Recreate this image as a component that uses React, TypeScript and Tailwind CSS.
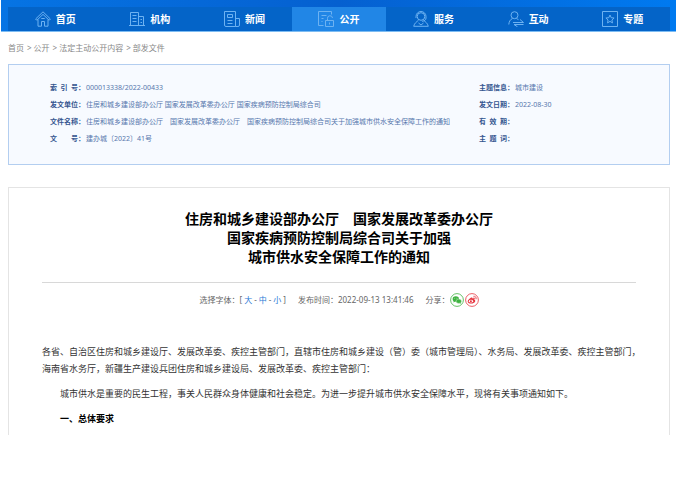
import type { ReactNode } from 'react';

const stroke = { fill: 'none', stroke: 'currentColor', strokeWidth: 1, strokeLinejoin: 'round' as const };

const icons: Record<string, ReactNode> = {
  首页: (
    <>
      <path d="M.6 8 8 .8 15.400 8l-1.200 1.300L8 3.400 1.800 9.300z" />
      <path d="M3 8.500v6.700h3.500v-4.700h3v4.700H13V8.500M6.300 7.500h3.400" />
    </>
  ),
  机构: (
    <>
      <path d="M1.500 14.500v-13h8v13M9.500 5.500h5v9M0 14.500h16" />
      <path d="M3.500 4.500h4M3.500 7.500h4M3.500 10.500h4M11.500 8.500h1.500M11.500 11.500h1.500" />
    </>
  ),
  新闻: (
    <>
      <path d="M11.500 15.500H2a1.500 1.500 0 0 1-1.500-1.500V.5h11zh2.500a1.500 1.500 0 0 0 1.500-1.500V7.500h-4" />
      <path d="M3.500 3.500h5v3h-5zM3.500 9.500h5M3.500 12.500h5" />
    </>
  ),
  公开: (
    <>
      <path d="M5.500 14.500H.5V.5h13v3M3.500 4.500h5M3.500 7.500h2M3.500 10.500h1" />
      <path d="M7.500 9.500h8v6h-8zM9.500 9.500V7.500a2.500 2.500 0 0 1 5-.5M11.500 11.500v2" />
    </>
  ),
  服务: (
    <>
      <circle cx="8" cy="5.500" r="3.800" />
      <path d="M3 7V5.500a5 5 0 0 1 10 0V7c0 2-1.500 3-4 3.300" />
      <path d="M5.500 9.200C3.500 11 1.500 12 .7 15.300h14.600c-.8-3.300-2.800-4.300-4.800-6.100M5.500 12l2.500 2 2.500-2" />
    </>
  ),
  互动: (
    <>
      <circle cx="6.500" cy="4.200" r="3.500" />
      <path d="M4.500 7.500C2 8.500 1 11 .8 13.500M8.500 7.500l2 1.200" />
      <path d="M5 11.500h10.500l-3.500-3M15.500 13.500H6l3.500 2.300" />
    </>
  ),
  专题: (
    <>
      <path d="M.5.5h15v15H.5z" />
      <path d="m8 4 1.200 2.700 2.900.3-2.200 2 .6 2.900L8 10.400l-2.500 1.500.6-2.900-2.200-2 2.900-.3z" />
    </>
  ),
};

const navItems = ['首页', '机构', '新闻', '公开', '服务', '互动', '专题'];

const crumbs = ['首页', '公开', '法定主动公开内容', '部发文件'];

const leftFields = [
  ['索引号', '000013338/2022-00433'],
  ['发文单位', '住房和城乡建设部办公厅 国家发展改革委办公厅 国家疾病预防控制局综合司'],
  ['文件名称', '住房和城乡建设部办公厅　国家发展改革委办公厅　国家疾病预防控制局综合司关于加强城市供水安全保障工作的通知'],
  ['文号', '建办城〔2022〕41号'],
];

const rightFields = [
  ['主题信息', '城市建设'],
  ['发文日期', '2022-08-30'],
  ['有效期', ''],
  ['主题词', ''],
];

function Fields({ rows }: { rows: string[][] }) {
  return (
    <dl>
      {rows.map(([label, value]) => (
        <div key={label} className="flex whitespace-nowrap">
          <dt className="flex w-9 shrink-0 font-bold text-[#34558f]">
            <span className="flex w-7 justify-between">
              {label.split('').map((c) => (
                <span key={c}>{c}</span>
              ))}
            </span>
            ：
          </dt>
          <dd>{value}</dd>
        </div>
      ))}
    </dl>
  );
}

function Nav() {
  return (
    <header className="ml-px border-b border-[#7dbcf2] bg-linear-to-r from-[#0674e4] via-[#0560d0] to-[#007af0] pr-[6px] pl-[7px] pt-[7px]">
      <nav className="grid grid-cols-7 bg-[#0464c8]">
        {navItems.map((name) => (
          <a
            key={name}
            href="#"
            className={`flex h-6 items-center justify-center gap-[5px] text-[10px] font-bold text-white ${name === '公开' ? 'bg-[#2186e6]' : ''}`}
          >
            <svg viewBox="0 0 16 16" className="size-4 text-[#6db2f2]" {...stroke} aria-hidden="true">
              {icons[name]}
            </svg>
            {name}
          </a>
        ))}
      </nav>
    </header>
  );
}

function WeChat() {
  return (
    <svg viewBox="0 0 14 14" className="size-[14px]" aria-hidden="true">
      <circle cx="7" cy="7" r="6.400" fill="#fff" stroke="#3eb340" strokeWidth=".8" />
      <ellipse cx="5.800" cy="6" rx="3.200" ry="2.700" fill="#3eb340" />
      <path d="m3.800 7.800-.4 1.800 2-1z" fill="#3eb340" />
      <ellipse cx="8.800" cy="8.200" rx="2.700" ry="2.200" fill="#3eb340" stroke="#fff" strokeWidth=".4" />
      <path d="m9.500 10 1.400.8-.3-1.500z" fill="#3eb340" />
      <circle cx="4.800" cy="5.200" r=".4" fill="#fff" />
      <circle cx="6.900" cy="5.200" r=".4" fill="#fff" />
    </svg>
  );
}

function Weibo() {
  return (
    <svg viewBox="0 0 14 14" className="size-[14px]" aria-hidden="true">
      <circle cx="7" cy="7" r="6.400" fill="#fff" stroke="#e6353f" strokeWidth=".8" />
      <path
        d="M5.800 4.700c.9-.6 1.900-.2 1.600.8 1.300-.5 2.300-.1 1.900.9 2 .9.9 4.100-3.200 4.100-4.600 0-4.300-3.500-.3-5.800z"
        fill="#e6353f"
      />
      <ellipse cx="6" cy="8.200" rx="2.100" ry="1.400" fill="#fff" />
      <circle cx="5.900" cy="8.300" r="1" fill="#e6353f" />
      <path
        d="M8.400 3.300c2-.4 3.200 1.100 2.700 3M8.600 4.800c.9-.1 1.300.4 1.100 1.200"
        fill="none"
        stroke="#e6353f"
        strokeWidth=".8"
      />
    </svg>
  );
}

export default function App() {
  return (
    <div className="min-h-screen bg-white font-['Noto_Sans','Noto_Sans_CJK_SC',sans-serif]">
      <Nav />
      <nav className="mt-2 flex gap-[3px] px-2 text-[8px] leading-4 text-[#888]">
        {crumbs.map((crumb, i) => (
          <span key={crumb} className="flex gap-[2px]">
            {i > 0 && <span>&gt;</span>}
            <a href="#">{crumb}</a>
          </span>
        ))}
      </nav>
      <main className="mr-[6px] ml-2">
        <section className="mt-2 grid grid-cols-[429px_1fr] border border-[#b3cef0] bg-[#f7faff] pt-[14px] pb-[17px] pl-[41px] text-[7px] leading-[17px] text-[#5677ad]">
          <Fields rows={leftFields} />
          <Fields rows={rightFields} />
        </section>
        <article className="mt-[22px] border border-b-0 border-[#e4e4e4] px-[33px] pt-[21px] pb-2">
          <h1 className="text-center text-[14px] leading-[19px] font-bold text-black">
            住房和城乡建设部办公厅　国家发展改革委办公厅
            <br />
            国家疾病预防控制局综合司关于加强
            <br />
            城市供水安全保障工作的通知
          </h1>
          <div className="mt-4 flex items-center justify-center gap-3 border-t border-[#d8d8d8] pt-[10px] text-[8px] leading-[14px] text-[#666]">
            <div className="flex">
              选择字体：[
              <span className="flex gap-[2px] px-[2px]">
                <button className="text-[#2a78d6]">大</button>-
                <button className="text-[#2a78d6]">中</button>-
                <button className="text-[#2a78d6]">小</button>
              </span>
              ]
            </div>
            <time>发布时间：2022-09-13 13:41:46</time>
            <div className="flex items-center">
              分享：
              <a href="#" aria-label="微信"><WeChat /></a>
              <a href="#" aria-label="微博" className="ml-px"><Weibo /></a>
            </div>
          </div>
          <div className="mt-9 space-y-2 text-[9px] leading-[17px] text-[#333]">
            <p className="whitespace-nowrap">
              各省、自治区住房和城乡建设厅、发展改革委、疾控主管部门，直辖市住房和城乡建设（管）委（城市管理局）、水务局、发展改革委、疾控主管部门，
              <br />
              海南省水务厅，新疆生产建设兵团住房和城乡建设局、发展改革委、疾控主管部门：
            </p>
            <p className="indent-[18px]">
              城市供水是重要的民生工程，事关人民群众身体健康和社会稳定。为进一步提升城市供水安全保障水平，现将有关事项通知如下。
            </p>
            <p className="indent-[18px] font-bold text-black">一、总体要求</p>
          </div>
        </article>
      </main>
    </div>
  );
}
